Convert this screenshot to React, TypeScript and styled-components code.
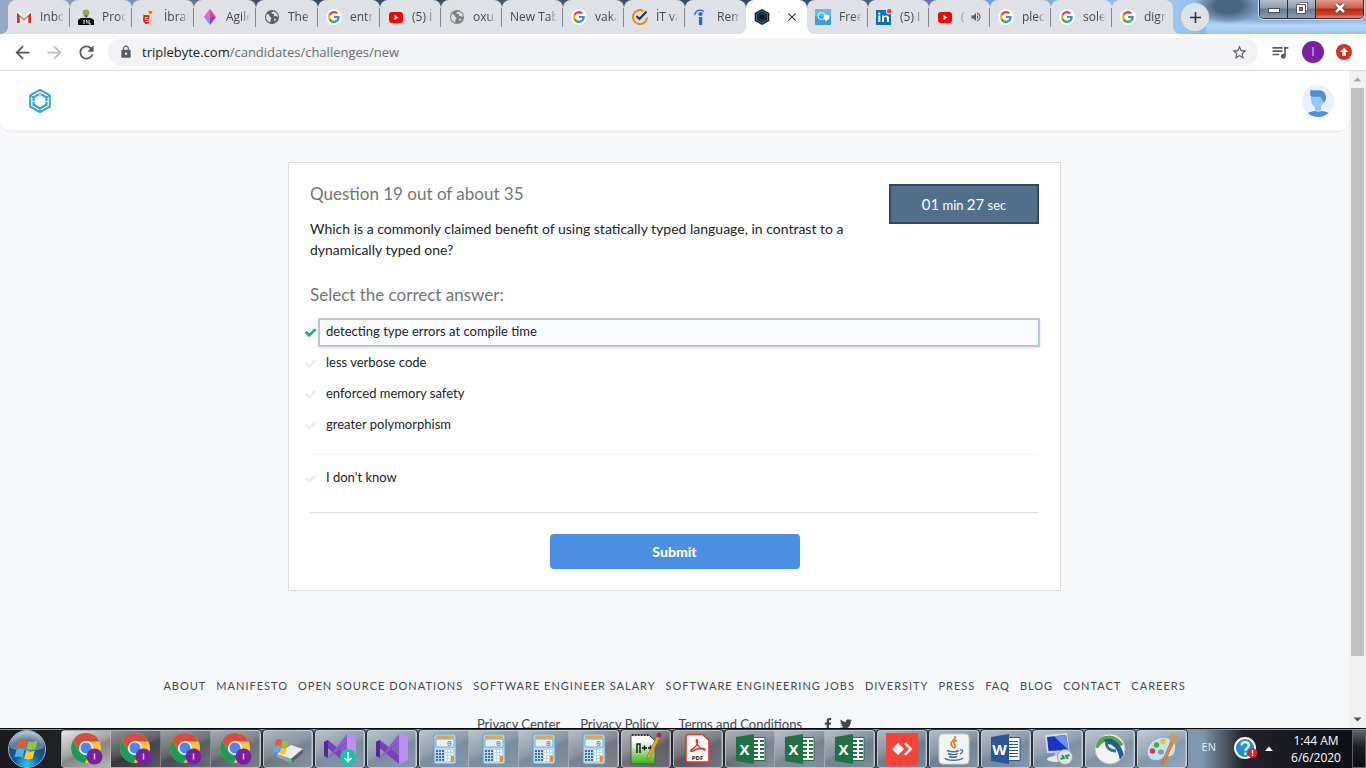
import React, { useState } from "react";
import styled, { createGlobalStyle, css } from "styled-components";
import {
  MdArrowBack, MdArrowForward, MdRefresh, MdLock, MdStarBorder, MdQueueMusic,
  MdVolumeUp, MdClose, MdAdd,
} from "react-icons/md";
import { FaTwitter, FaFacebookF } from "react-icons/fa";

const uiFont = `"Open Sans", "Noto Sans", sans-serif`;
const pageFont = `Lato, "Liberation Sans", sans-serif`;

const GlobalStyle = createGlobalStyle`
  * { box-sizing: border-box; }
  body { margin: 0; font-family: ${uiFont}; overflow: hidden; }
  button { font: inherit; border: 0; padding: 0; background: none; color: inherit; cursor: pointer; }
  svg { display: block; flex: none; }
`;

const Desktop = styled.div`
  display: flex;
  flex-direction: column;
  height: 100vh;
`;

/* ---------- tab strip ---------- */

const TitleBar = styled.header`
  display: flex;
  align-items: stretch;
  height: 34px;
  padding-left: 8px;
  background:
    radial-gradient(ellipse 34px 18px at calc(100% - 138px) 6px, #4d6480 0 40%, transparent),
    linear-gradient(to bottom, transparent 55%, #b4d6f8 75%, #9fc3e9) right / 160px 100% no-repeat,
    linear-gradient(to right, #93aac2 0, #7d93ad 10%, #33465c 20%, #46596f 40%, #2f4560 55%, #50688a 66%, #74a4d6 73%, #9cc6f0 86%, #7d9fc4 93%, #8fb0d4);
`;

const Tabs = styled.nav`
  display: grid;
  grid-template-columns: repeat(6, 62fr) repeat(13, 61fr);
  flex: 1;
  min-width: 0;
`;

const foot = css`
  content: "";
  position: absolute;
  bottom: 0;
  width: 8px;
  height: 8px;
`;

const Tab = styled.button<{ $active?: boolean; $first?: boolean; $last?: boolean }>`
  position: relative;
  display: flex;
  align-items: center;
  gap: 8px;
  min-width: 0;
  padding: 0 6px 0 8px;
  border-radius: 8px 8px 0 0;
  background: ${(p) => (p.$active ? "#fff" : "#dee1e6")};
  color: #45484d;
  font-size: 12px;
  line-height: 16px;
  text-align: left;
  z-index: ${(p) => (p.$active ? 1 : 0)};
  &::before {
    ${foot}
    left: -8px;
    display: ${(p) => (p.$active || p.$first ? "block" : "none")};
    background: radial-gradient(circle at 0 0, transparent 8px, ${(p) => (p.$active ? "#fff" : "#dee1e6")} 8px);
  }
  &::after {
    ${foot}
    right: -8px;
    display: ${(p) => (p.$active || p.$last ? "block" : "none")};
    background: radial-gradient(circle at 100% 0, transparent 8px, ${(p) => (p.$active ? "#fff" : "#dee1e6")} 8px);
  }
`;

const Separator = styled.i`
  position: absolute;
  right: 0;
  top: 8px;
  width: 1px;
  height: 19px;
  background: #85898f;
  z-index: 1;
`;

const TabTitle = styled.span`
  flex: 1;
  min-width: 0;
  overflow: hidden;
  white-space: nowrap;
  mask-image: linear-gradient(to left, transparent, #000 8px);
`;

const TabAction = styled.span`
  margin: 0 2px 0 -4px;
`;

const StripEnd = styled.div`
  display: flex;
  justify-content: space-between;
  width: 193px;
  padding: 0 2px 0 8px;
`;

const NewTab = styled.button`
  display: grid;
  place-items: center;
  width: 28px;
  height: 28px;
  margin-top: 3px;
  border-radius: 50%;
  background: #dee1e6;
  color: #303338;
`;

const WindowButtons = styled.div`
  display: flex;
  height: 19px;
  border: 1px solid #26303c;
  border-top: 0;
  border-radius: 0 0 5px 5px;
  overflow: hidden;
  box-shadow: 0 0 0 1px #cfdfee;
`;

const WindowButton = styled.button<{ $close?: boolean }>`
  display: grid;
  place-items: center;
  width: ${(p) => (p.$close ? 47 : 28)}px;
  padding-bottom: 2px;
  border-right: ${(p) => (p.$close ? 0 : 1)}px solid #26303c;
  background: ${(p) =>
    p.$close
      ? "linear-gradient(to bottom, #e09a8c, #cf5b45 45%, #b8260f 50%, #c9432c 80%, #e2917a)"
      : "linear-gradient(to bottom, #b4bfcd, #8d9bac 45%, #66788d 50%, #8a9db3)"};
`;

/* ---------- toolbar ---------- */

const Toolbar = styled.div`
  display: flex;
  align-items: center;
  height: 37px;
  padding: 0 14px 0 6px;
  background: #fff;
  border-bottom: 1px solid #d8d9dc;
  color: #5a5e63;
`;

const NavButton = styled.button<{ $off?: boolean }>`
  display: grid;
  place-items: center;
  width: 32px;
  height: 28px;
  color: ${(p) => (p.$off ? "#bcbec1" : "#55595e")};
`;

const AddressBar = styled.div`
  display: flex;
  align-items: center;
  flex: 1;
  gap: 9px;
  height: 28px;
  margin-left: 6px;
  padding: 0 10px 0 11px;
  border-radius: 14px;
  background: #f1f3f4;
`;

const Url = styled.span`
  flex: 1;
  font-size: 13px;
  line-height: 20px;
  color: #696c70;
  b { font-weight: 400; color: #202124; }
`;

const Extensions = styled.div`
  display: flex;
  align-items: center;
  gap: 12px;
  margin-left: 12px;
`;

const Profile = styled.button`
  width: 22px;
  height: 22px;
  border-radius: 50%;
  background: #7b1fa2;
  color: #e3cdee;
  font-size: 12px;
  line-height: 22px;
`;

/* ---------- page ---------- */

const Viewport = styled.div`
  display: flex;
  flex: 1;
  min-height: 0;
  overflow: hidden;
  background: #f7f8fa;
`;

const Page = styled.div`
  flex: 1;
  min-width: 0;
  overflow: hidden;
  font-family: ${pageFont};
`;

const SiteHeader = styled.div`
  display: flex;
  align-items: center;
  justify-content: space-between;
  height: 61px;
  padding: 0 15px 0 28px;
  background: #fff;
  border-bottom: 1px solid #e4e7ee;
  border-radius: 0 0 12px 12px;
`;

const Card = styled.form`
  max-width: 773px;
  margin: 30px auto 0;
  padding: 20px 21px 21px;
  background: #fff;
  border: 1px solid #dcdddf;
`;

const CardTop = styled.div`
  display: flex;
  justify-content: space-between;
  align-items: flex-start;
`;

const Heading = styled.h2`
  margin: 0;
  font-size: 17px;
  line-height: 22px;
  font-weight: 400;
  color: #757575;
`;

const AnswerHeading = styled(Heading)`
  margin-bottom: 12px;
`;

const Question = styled.p`
  max-width: 546px;
  margin: 13px 0 24px;
  font-size: 14px;
  line-height: 21px;
  color: #212529;
`;

const Timer = styled.div`
  flex: none;
  width: 150px;
  height: 40px;
  margin-top: 1px;
  border: 2px solid #34495e;
  background: #526f8b;
  color: #fff;
  font-size: 13px;
  line-height: 36px;
  text-align: center;
  big { font-size: 15px; }
`;

const Options = styled.div`
  margin: 0 -1px 0 -6px;
`;

const Option = styled.label<{ $on: boolean }>`
  display: flex;
  align-items: center;
  gap: 1px;
  height: 29px;
  margin-bottom: 2px;
  color: ${(p) => (p.$on ? "#15b374" : "#ececec")};
  input { position: absolute; opacity: 0; pointer-events: none; }
`;

const OptionText = styled.span<{ $on: boolean }>`
  flex: 1;
  height: 29px;
  padding: 0 7px;
  border: 1px solid ${(p) => (p.$on ? "#c6cace" : "transparent")};
  box-shadow: ${(p) => (p.$on ? "inset 0 0 0 1px #a3c4f1, 0 1px 3px #e6e6e6" : "none")};
  background: ${(p) => (p.$on ? "#fafcff" : "transparent")};
  font-size: 13px;
  line-height: 24px;
  color: #212529;
`;

const Divider = styled.hr<{ $strong?: boolean }>`
  margin: ${(p) => (p.$strong ? "19px 0 21px" : "14px 0 9px")};
  border: 0;
  border-top: 1px solid ${(p) => (p.$strong ? "#dadada" : "#f7f7f7")};
`;

const Submit = styled.button`
  display: block;
  width: 250px;
  height: 35px;
  margin: 0 auto;
  border-radius: 4px;
  background: #4990e2;
  color: #fff;
  font-family: ${pageFont};
  font-size: 14px;
  font-weight: 900;
`;

const Footer = styled.footer`
  margin-top: 86px;
  color: #45484e;
  a { color: inherit; text-decoration: none; }
`;

const FooterLinks = styled.nav`
  display: flex;
  justify-content: center;
  gap: 10px;
  font-size: 11px;
  line-height: 18px;
  letter-spacing: 1px;
  white-space: nowrap;
`;

const LegalLinks = styled.nav`
  display: flex;
  justify-content: center;
  align-items: center;
  gap: 20px;
  margin-top: 20px;
  padding-right: 20px;
  font-size: 13px;
  line-height: 18px;
`;

const Social = styled.span`
  display: flex;
  gap: 6px;
`;

const Scrollbar = styled.div`
  display: flex;
  flex-direction: column;
  align-items: center;
  width: 17px;
  background: #f1f1f1;
`;

const ScrollThumb = styled.div`
  flex: 1;
  width: 13px;
  margin-bottom: 55px;
  background: #c1c1c1;
`;

const Arrow = styled.svg.attrs({ width: 17, height: 17, viewBox: "0 0 17 17" })``;

/* ---------- taskbar ---------- */

const Taskbar = styled.footer`
  display: flex;
  height: 40px;
  border-top: 1px solid #05080c;
  box-shadow: inset 0 1px 0 #8396a5;
  background: linear-gradient(to right, #1b1c1f 0, #25272b 8%, #5d6670 18%, #73879a 24%, #6f8496 40%, #6b6c78 45%, #4f4a55 50%, #71808f 57%, #627284 66%, #75899d 78%, #8297ab 88%, #24222c 91%, #15161d 96%, #0c0d12);
`;

const StartButton = styled.button`
  display: grid;
  place-items: center;
  flex: none;
  width: 61px;
  padding-right: 7px;
`;

const TaskGroup = styled.div`
  display: flex;
  flex: none;
  margin: 1px 2px 0 0;
  border: 1px solid rgba(225, 232, 238, 0.7);
  border-radius: 3px;
  outline: 1px solid rgba(20, 25, 32, 0.75);
`;

const Task = styled.button<{ $edge: number; $active?: boolean }>`
  display: grid;
  place-items: center;
  width: ${(p) => 50 - p.$edge}px;
  background: ${(p) =>
    p.$active
      ? "linear-gradient(155deg, #e4e4e4, #a5a5a5 45%, #858585 55%, #b4b4b4)"
      : "linear-gradient(155deg, rgba(255,255,255,.5), rgba(255,255,255,.2) 45%, rgba(255,255,255,.06) 55%, rgba(255,255,255,.15))"};
  box-shadow: inset -1px 0 0 rgba(255, 255, 255, 0.25);
`;

const Tray = styled.div`
  display: flex;
  flex: 1;
  align-items: center;
  justify-content: flex-end;
  color: #fff;
  font-size: 12px;
`;

const Language = styled.span`
  margin-right: 18px;
  padding-bottom: 5px;
  font-size: 11px;
  color: #e8edf2;
`;

const Clock = styled.time`
  width: 72px;
  text-align: center;
  line-height: 17px;
  font-size: 12px;
`;

const ShowDesktop = styled.button`
  align-self: stretch;
  width: 14px;
  margin-top: 1px;
  border: 1px solid #5c6068;
  background: linear-gradient(to bottom, #5e6167, #1a1b20 45%, #0e0f13);
`;

/* ---------- drawings ---------- */

const GoogleIcon = () => (
  <svg width="16" height="16" viewBox="0 0 32 32">
    <circle cx="16" cy="16" r="16" fill="#fff" />
    <g transform="translate(4 4)">
      <path fill="#4285f4" d="M23.500 12.300c0-.9-.1-1.500-.2-2.200H12v4.100h6.600c-.1 1.100-.9 2.800-2.500 3.900l3.800 3C22.100 19 23.500 16 23.500 12.300z" />
      <path fill="#34a853" d="M12 24c3.200 0 5.900-1.100 7.900-2.900l-3.800-3c-1 .7-2.400 1.200-4.100 1.200-3.200 0-5.800-2.100-6.800-5l-3.900 3C3.300 21.300 7.300 24 12 24z" />
      <path fill="#fbbc05" d="M5.200 14.300c-.2-.7-.4-1.500-.4-2.300s.1-1.600.4-2.300l-4-3.100C.5 8.300 0 10.100 0 12s.5 3.700 1.300 5.400z" />
      <path fill="#ea4335" d="M12 4.700c2.200 0 3.700 1 4.600 1.800L20 3.200C17.900 1.200 15.200 0 12 0 7.300 0 3.300 2.700 1.300 6.600l3.900 3.100c1-3 3.600-5 6.800-5z" />
    </g>
  </svg>
);

const YoutubeIcon = () => (
  <svg width="16" height="16" viewBox="0 0 16 16">
    <rect x="1" y="3" width="14" height="11" rx="3" fill="#f00" />
    <path d="M6.500 6v5l4-2.500z" fill="#fff" />
  </svg>
);

const GlobeIcon = ({ color }: { color: string }) => (
  <svg width="16" height="16" viewBox="0 0 16 16">
    <circle cx="8" cy="8" r="7" fill={color} />
    <path d="M3 5c2 .3 2.500 1 2.500 2s1.800 1 2 2-1 1-1 2.200 0 1.300-.5 2.300C3.500 12.500 2 10.500 2 8c0-1 .4-2.200 1-3zM9 2.500c-1 1-2 1-1.500 2s2-.3 2.500.7-.8 1.300.2 1.800 2.800 0 3.800 1C14 5 12 2.700 9 2.500zM10 9.500l2.500.5-2 2.500z" fill="#dee1e6" />
  </svg>
);

const GmailIcon = () => (
  <svg width="16" height="16" viewBox="0 0 16 16">
    <rect x="1" y="3" width="14" height="11" rx="1" fill="#f4f4f4" />
    <path d="M1 14V4l7 6 7-6v10h-2.500V7.500L8 11.500 3.500 7.500V14z" fill="#d54b3d" />
    <path d="M3 3h10L8 7.500z" fill="#e6e0dd" />
    <path d="M1 14V4l2.500 2V14zM15 14V4l-2.500 2v8z" fill="#c5372c" />
  </svg>
);

const PersonIcon = () => (
  <svg width="16" height="16" viewBox="0 0 16 16">
    <path d="M0 16V11l3-2h10l3 2v5z" fill="#050505" />
    <circle cx="8" cy="3.800" r="3.300" fill="#95a55a" />
    <path d="M6.500 6h3v2.500h-3z" fill="#5f6f35" />
    <path d="M6 11v4M8 11.500h1v3M11 11v4h2" stroke="#fff" fill="none" />
  </svg>
);

const PopcornIcon = () => (
  <svg width="16" height="16" viewBox="0 0 16 16">
    <path d="M3.500 5h8.500l-2 9.500-4.500.5L3 12z" fill="#d8262b" />
    <path d="M9.500 7l2.500-1-1.500 8-1.500.5z" fill="#f6e6da" />
    <path d="M3.500 6L3 3.500 5 2l1-1.500L8.500 1l2-.5L12 2l1.500 1-.5 2.500-2 1.500-3-1z" fill="#efe0bb" />
    <path d="M8.500 1.500l2 1 2-.5-1 2.500-2 .5z" fill="#c7523b" />
    <path d="M8 8.500H5.500v2H8v2H5.500" stroke="#ffc934" strokeWidth="1.200" fill="none" />
    <path d="M11 13l2.500 1-1 2H9z" fill="#e3cfa8" />
  </svg>
);

const GemIcon = () => (
  <svg width="16" height="16" viewBox="0 0 16 16">
    <path d="M8 0l6 8H2z" fill="#f0379b" />
    <path d="M8 0v8H2z" fill="#ff5eb0" />
    <path d="M2 8h6v8z" fill="#55a8f3" />
    <path d="M8 8h6l-6 8z" fill="#7b42e8" />
  </svg>
);

const CheckRingIcon = () => (
  <svg width="16" height="16" viewBox="0 0 16 16" fill="none">
    <path d="M11.500 2A7 7 0 1 0 15 8.500" stroke="#f5831f" strokeWidth="2" />
    <path d="M4.500 7l3 3 7-7.500" stroke="#2b2f36" strokeWidth="2" />
  </svg>
);

const IndeedIcon = () => (
  <svg width="16" height="16" viewBox="0 0 16 16">
    <path d="M1.500 6C3 1 7 0 11 2.500" stroke="#2566eb" strokeWidth="1.300" fill="none" />
    <circle cx="7.500" cy="5" r="2.100" fill="#2566eb" />
    <path d="M6 8h3.200v8H6z" fill="#2566eb" />
  </svg>
);

const HexIcon = () => (
  <svg width="16" height="16" viewBox="0 0 16 16">
    <path d="M8 0l7.300 4v8L8 16 .7 12V4z" fill="#14222d" />
    <path d="M8 2l5.500 3v6L8 14l-5.500-3V5z" fill="none" stroke="#2f7fa3" />
    <path d="M8 4.500L11 6.200v3.600L8 11.500 5 9.800V6.200z" fill="#05090c" stroke="#2f7fa3" strokeWidth=".6" />
  </svg>
);

const ChatIcon = () => (
  <svg width="16" height="16" viewBox="0 0 16 16">
    <rect width="16" height="16" rx="1" fill="#3a9fdb" />
    <path d="M0 0h16v7H0z" fill="#62bbe8" />
    <circle cx="6.500" cy="7" r="3.500" fill="none" stroke="#e8f6fd" />
    <path d="M10.500 5.500c2.500 0 4 1 4 2.700s-1.300 2.500-2.500 3l-1.500 1.500v-1.500C8 10.500 8 6 10.500 5.500z" fill="#f2fbff" />
  </svg>
);

const LinkedinIcon = () => (
  <svg width="16" height="16" viewBox="0 0 16 16">
    <path d="M0 1h15v15H0z" fill="#0a72b1" />
    <path d="M2.300 6.500h2V13h-2zM2.300 3.500h2v2h-2zM6 6.500h2v1c1-1.600 5-1.600 5 1.500v4h-2V9.500c0-2-3-2-3 0V13H6z" fill="#fff" />
    <circle cx="13" cy="2.500" r="3" fill="#dee1e6" />
    <circle cx="13.200" cy="2.300" r="2.200" fill="#ea4335" />
  </svg>
);

const Check = () => (
  <svg width="13" height="13" viewBox="0 0 1792 1792" fill="currentColor">
    <path d="M1671 566q0 40-28 68l-724 724-136 136q-28 28-68 28t-68-28l-136-136-362-362q-28-28-28-68t28-68l136-136q28-28 68-28t68 28l294 295 656-657q28-28 68-28t68 28l136 136q28 28 28 68z" />
  </svg>
);

const SiteLogo = () => (
  <svg width="24" height="26" viewBox="0 0 24 26" fill="none" stroke="#35a0cf">
    <path d="M12 1.800l9.800 5.600v11.200L12 24.200l-9.800-5.600V7.400z" strokeWidth="2" />
    <path d="M12 5.800l6.500 3.600v7.400L12 20.500l-6.500-3.700V9.400z" strokeWidth="2.200" />
    <path d="M2.500 7.500l3.500 2M21.500 7.500l-3.500 2M12 20v4" strokeWidth="1.400" />
    <path d="M3.500 13.500h3M20.500 13.500h-3M9.500 5l2.500 2 2.500-2" stroke="#fff" strokeWidth=".8" />
  </svg>
);

const Avatar = () => (
  <svg width="32" height="32" viewBox="0 0 32 32">
    <defs><clipPath id="face"><circle cx="16" cy="16" r="16" /></clipPath></defs>
    <circle cx="16" cy="16" r="16" fill="#e9f1fc" />
    <g clipPath="url(#face)">
      <path d="M9 10h13c0 5-.5 9-3 11v6h-6v-5c-3-1-4.500-6-4-12z" fill="#98c5fb" />
      <path d="M6 28c3-1.500 6-2 7-2 1.500 1.500 5 1.500 6.500 0 2 0 5 .8 7.500 2v5H6z" fill="#4990e2" />
      <path d="M8.500 11C8 8 8 6 9 4.500 10 6 15 5 19 5.500c4 1 5.500 5 5 8.500-.4 2-1.500 3-3 3.500 0-2-.5-3-1.500-4-.5-1-1-1.500-1.500-2-3 .5-6 .5-9.500-.5z" fill="#4990e2" />
    </g>
  </svg>
);

const UpdateIcon = () => (
  <svg width="16" height="16" viewBox="0 0 16 16">
    <circle cx="8" cy="8" r="8" fill="#d93025" />
    <path d="M8 3.500L12.200 8H9.800v3.800H6.200V8H3.800z" fill="#fff" />
  </svg>
);

const StartOrb = () => (
  <svg width="38" height="38" viewBox="0 0 38 38">
    <defs>
      <radialGradient id="orb" cx=".5" cy=".9" r=".85">
        <stop offset="0" stopColor="#2fc4f5" /><stop offset=".4" stopColor="#0e5f9b" />
        <stop offset=".75" stopColor="#26486a" /><stop offset="1" stopColor="#9fb9cc" />
      </radialGradient>
    </defs>
    <circle cx="19" cy="19" r="18.500" fill="url(#orb)" stroke="#9ab6c8" />
    <path d="M2 18C2 8 9 2 19 2s17 6 17 16c-8 4-24 4-34 0z" fill="#cfe0ec" opacity=".35" />
    <path d="M11 10c3-1.600 5-1.200 8 .2l-2 8c-3-1.300-5-1.500-8-.2z" fill="#ee5a24" />
    <path d="M20.500 11c3 1.300 6 1.300 9-.2l-2.200 8c-3 1.400-5.500 1.300-8.500.1z" fill="#8fc640" />
    <path d="M8.600 19.500c3-1.400 5-1 8 .1l-2 8c-3-1.200-5-1.500-8.200-.1z" fill="#4fb2ec" />
    <path d="M18.200 20.500c3 1.200 5.500 1.300 8.600-.1l-2.200 8c-3 1.400-5.500 1.200-8.400.1z" fill="#fdc82d" />
  </svg>
);

const ChromeIcon = () => (
  <svg width="34" height="34" viewBox="0 0 34 34">
    <circle cx="16" cy="16" r="15" fill="#fdc73a" />
    <path d="M3 8.500A15 15 0 0 1 29.500 9.500H16a7 7 0 0 0-6.200 9.500z" fill="#dd4b3e" />
    <path d="M3 8.500A15 15 0 0 0 14.500 31l6.500-10.500a7 7 0 0 1-11.200-1z" fill="#199d5a" />
    <circle cx="16" cy="16" r="7" fill="#f4f4f4" />
    <circle cx="16" cy="16" r="5.500" fill="#4a87ee" />
    <circle cx="24.500" cy="24.500" r="8" fill="#7b1fa2" />
    <path d="M24.500 21.500v6" stroke="#d9bfe6" strokeWidth="1.500" />
  </svg>
);

const DriveIcon = () => (
  <svg width="34" height="32" viewBox="0 0 34 32">
    <path d="M6 21l14-9 12 4-12 10z" fill="#e9edf0" />
    <path d="M6 21l14 5v4L6 24z" fill="#9aa3a9" />
    <path d="M20 26l12-10v4l-12 10z" fill="#555e66" />
    <path d="M17 25.500l4 1.500v2.500l-4-1.500z" fill="#3ed83c" />
    <path d="M5 7q3-2 6 0l-1.500 6q-3-2-6 0z" fill="#ee5a24" />
    <path d="M12 7.500q3 1.500 6 0l-1.500 6q-3 2-6 0z" fill="#8fc640" />
    <path d="M3 14q3-2 6 0l-1.500 6q-3-2-6 0z" fill="#4fb2ec" />
    <path d="M10 14.500q3 1.500 6 0l-1.500 6q-3 2-6 0z" fill="#fdc82d" />
  </svg>
);

const VisualStudioIcon = ({ badge }: { badge?: boolean }) => (
  <svg width="34" height="34" viewBox="0 0 34 34">
    <path d="M1 10l4-2 19 16v8L1 13z" fill="#7d3dc0" />
    <path d="M1 10l4-2v18l-4-2z" fill="#532a95" />
    <path d="M5 26L24 2v9L8 24z" fill="#9556d8" />
    <path d="M24 1l9 4v23l-9 5z" fill="#bd8ef2" />
    <path d="M24 10L14 17l10 8z" fill="#7840b8" opacity=".5" />
    {badge && (
      <g>
        <circle cx="25" cy="25" r="8" fill="#12c5a8" />
        <path d="M25 20v9M21.500 26l3.500 3.500 3.500-3.500" stroke="#fff" strokeWidth="1.700" fill="none" />
      </g>
    )}
  </svg>
);

const CalculatorIcon = () => (
  <svg width="24" height="32" viewBox="0 0 24 32">
    <rect x="1" y="1" width="22" height="30" rx="2" fill="#b9d9f0" stroke="#5e9cc6" />
    <path d="M3 2.500h18v3H3z" fill="#f3a42e" />
    <path d="M3 6h18v8H3z" fill="#e3f1fb" stroke="#79a9cd" />
    <text x="14" y="13" fontFamily="Liberation Mono" fontSize="8" fill="#33618d">0</text>
    {[17, 20, 23, 26].map((y) =>
      [3, 6, 9, 12, 15, 18].map((x) => (
        <rect key={`${x}-${y}`} x={x} y={y} width="2" height="2" fill={x < 11 ? "#3d6f9f" : "#fff"} />
      )),
    )}
    <path d="M18 23h3v6h-3z" fill="#f28b1d" />
  </svg>
);

const NotepadIcon = () => (
  <svg width="32" height="34" viewBox="0 0 32 34">
    <defs>
      <linearGradient id="pad" x2="0" y2="1"><stop offset=".2" stopColor="#fff" /><stop offset="1" stopColor="#2fb70c" /></linearGradient>
    </defs>
    <path d="M1 3h18l6 6v23H1z" fill="url(#pad)" stroke="#4f594c" />
    <path d="M2 3h17" stroke="#333" strokeDasharray="1.500 1.500" strokeWidth="2" />
    <path d="M7 21v-9h3v9M12 16h5M14.500 13.500v5M18 16h5M20.500 13.500v5" stroke="#111" strokeWidth="1.400" fill="none" />
    <path d="M27 4l3 1.500L20 26l-3 1 .5-3.500z" fill="#e8a526" stroke="#8a5a12" strokeWidth=".6" />
    <circle cx="29" cy="3" r="2.500" fill="#9c3340" />
  </svg>
);

const PdfIcon = () => (
  <svg width="26" height="32" viewBox="0 0 26 32">
    <path d="M3 1.500h15l6 6V29H3a2 2 0 0 1-2-2V3.500a2 2 0 0 1 2-2z" fill="#fff" stroke="#e5322d" strokeWidth="1.600" />
    <path d="M6 17c4-2 7-6 6.500-10-1.500-1.500-2 1 0 4.500s5 5 7.500 5.500c1-2-5-2-9-.5-3 1.500-6 3-5 .5z" fill="none" stroke="#e5322d" strokeWidth="1.400" />
    <text x="12.500" y="27" textAnchor="middle" fontFamily="Open Sans" fontWeight="700" fontSize="6" fill="#111">PDF</text>
  </svg>
);

const OfficeIcon = ({ letter, color }: { letter: string; color: string }) => (
  <svg width="32" height="32" viewBox="0 0 32 32">
    <path d="M16 4.500h14v23H16z" fill="#fff" stroke={color} />
    {letter === "X" ? (
      <path d="M19 8h4M25 8h4M19 12h4M25 12h4M19 16h4M25 16h4M19 20h4M25 20h4M19 24h4M25 24h4" stroke={color} strokeWidth="2" />
    ) : (
      <path d="M18 8.500h10M18 11.500h10M18 14.500h10M18 17.500h10M18 20.500h10M18 23.500h10" stroke={color} />
    )}
    <path d="M1 4l18-3v30L1 28z" fill={color} />
    <text x="9.500" y="21.500" textAnchor="middle" fontFamily="Open Sans" fontWeight="700" fontSize="15" fill="#fff">{letter}</text>
  </svg>
);

const AnydeskIcon = () => (
  <svg width="32" height="32" viewBox="0 0 32 32">
    <path d="M0 0h32v32H0z" fill="#fb4236" />
    <path d="M12 10l6 6-6 6-6-6z" fill="#fff" />
    <path d="M17.500 10.500L20 9.500l6.500 6.500-6.500 6.500-2.500-1 5.500-5.500z" fill="#fff" />
  </svg>
);

const JavaIcon = () => (
  <svg width="32" height="32" viewBox="0 0 32 32" fill="none">
    <rect x="1" y="1" width="30" height="30" rx="4" fill="#f1f4f6" stroke="#c5cdd4" />
    <path d="M17 3c2 4-5 5-4 8 .5 2 2 2.500 2 4M19 7c-4 2-4 3-2 5 1 1.500 0 2.500-1 3.500" stroke="#e8791d" strokeWidth="1.600" />
    <path d="M9 17.500c4 1.500 9 1.500 12 0M10 20.500c3 1.500 8 1.500 10 0M11 23.500c3 1 6 1 8 0M7 25c1 3 15 3 18 0M22 17c4-1 3 3 0 4" stroke="#3f6f96" strokeWidth="1.400" />
  </svg>
);

const RemoteIcon = () => (
  <svg width="34" height="34" viewBox="0 0 34 34">
    <path d="M4 3l22-2 3 19L6 21z" fill="#d7dde2" />
    <path d="M6 5l19-2 2.500 15L7.500 19z" fill="#1b32c8" />
    <path d="M13 4.300L25 3l2.500 15z" fill="#6f93f2" />
    <path d="M14 21h8l1 5H12z" fill="#c5ccd2" />
    <ellipse cx="15" cy="27" rx="9" ry="3" fill="#e5e9ec" />
    <circle cx="24" cy="25" r="7.500" fill="#dfe4e3" stroke="#9aa2a5" />
    <path d="M19.500 27l3.500-1-2-3M28.500 23l-3.500 1 2 3" stroke="#229a3a" strokeWidth="2" fill="none" />
  </svg>
);

const SphereIcon = () => (
  <svg width="32" height="32" viewBox="0 0 32 32">
    <defs><clipPath id="ball"><circle cx="16" cy="16" r="15" /></clipPath></defs>
    <circle cx="16" cy="16" r="15" fill="#f1f4f3" />
    <g clipPath="url(#ball)" fill="none">
      <path d="M1 14C8 3 20 3 27 13" stroke="#55a842" strokeWidth="6" />
      <path d="M11 9c8-3 16 6 17 17" stroke="#1d5c9c" strokeWidth="5" />
      <path d="M13 8c-2 6 3 10 9 10" stroke="#32798f" strokeWidth="3" />
    </g>
    <circle cx="16" cy="16" r="15" fill="none" stroke="#b8c2c5" />
  </svg>
);

const PaintIcon = () => (
  <svg width="34" height="34" viewBox="0 0 34 34">
    <path d="M3 24C-1 16 8 5 18 5s15 7 12 15-9 3-12 6-11 5-15-2z" fill="#c4e1f2" stroke="#6ea6ca" />
    <ellipse cx="16" cy="20" rx="3" ry="2.500" fill="#7799b3" />
    <circle cx="7.500" cy="19" r="2.700" fill="#d93a34" />
    <circle cx="11.500" cy="13" r="2.700" fill="#41a844" />
    <circle cx="18" cy="9.500" r="2.700" fill="#f2c31d" />
    <path d="M26 9l3 1-11 23-2-1z" fill="#e98a24" stroke="#b15d10" strokeWidth=".6" />
    <path d="M25 10l-1-6 4-3 5 3-3 7z" fill="#c79b63" />
  </svg>
);

const HelpIcon = () => (
  <svg width="24" height="24" viewBox="0 0 24 24">
    <circle cx="11" cy="11" r="10" fill="#1795d8" stroke="#fff" strokeWidth="2" />
    <path d="M7.500 8.500c0-4.500 7.300-4.300 7.300 0 0 2.700-3.500 2.600-3.500 5.500M11.300 15.500v2.500" stroke="#fff" strokeWidth="2.300" fill="none" />
    <circle cx="18.500" cy="16" r="4.800" fill="#ef1c24" />
    <path d="M18.500 13v3.500M18.500 17.500v1.500" stroke="#fff" strokeWidth="1.400" />
  </svg>
);

/* ---------- data ---------- */

const google = <GoogleIcon />;
const tabs: { icon?: React.ReactNode; title: string; active?: boolean; audio?: boolean }[] = [
  { icon: <GmailIcon />, title: "Inbo" },
  { icon: <PersonIcon />, title: "Proc" },
  { icon: <PopcornIcon />, title: "İbral" },
  { icon: <GemIcon />, title: "Agile" },
  { icon: <GlobeIcon color="#5a5d61" />, title: "The" },
  { icon: google, title: "entr" },
  { icon: <YoutubeIcon />, title: "(5) İ" },
  { icon: <GlobeIcon color="#808080" />, title: "oxu." },
  { title: "New Tab" },
  { icon: google, title: "vaka" },
  { icon: <CheckRingIcon />, title: "İT va" },
  { icon: <IndeedIcon />, title: "Rem" },
  { icon: <HexIcon />, title: "T", active: true },
  { icon: <ChatIcon />, title: "Free" },
  { icon: <LinkedinIcon />, title: "(5) I" },
  { icon: <YoutubeIcon />, title: "(", audio: true },
  { icon: google, title: "plec" },
  { icon: google, title: "sole" },
  { icon: google, title: "digr" },
];

const answers = [
  "detecting type errors at compile time",
  "less verbose code",
  "enforced memory safety",
  "greater polymorphism",
];

const footerLinks = [
  "ABOUT", "MANIFESTO", "OPEN SOURCE DONATIONS", "SOFTWARE ENGINEER SALARY",
  "SOFTWARE ENGINEERING JOBS", "DIVERSITY", "PRESS", "FAQ", "BLOG", "CONTACT", "CAREERS",
];

const excel = <OfficeIcon letter="X" color="#1f7244" />;
const taskGroups: { name: string; icons: React.ReactNode[]; active?: boolean }[] = [
  { name: "Chrome", icons: [<ChromeIcon />, <ChromeIcon />, <ChromeIcon />, <ChromeIcon />], active: true },
  { name: "Drive", icons: [<DriveIcon />] },
  { name: "Installer", icons: [<VisualStudioIcon badge />] },
  { name: "Visual Studio", icons: [<VisualStudioIcon />] },
  { name: "Calculator", icons: [<CalculatorIcon />, <CalculatorIcon />, <CalculatorIcon />, <CalculatorIcon />] },
  { name: "Notepad++", icons: [<NotepadIcon />] },
  { name: "PDF", icons: [<PdfIcon />] },
  { name: "Excel", icons: [excel, excel, excel] },
  { name: "AnyDesk", icons: [<AnydeskIcon />] },
  { name: "Java", icons: [<JavaIcon />] },
  { name: "Word", icons: [<OfficeIcon letter="W" color="#2a579a" />] },
  { name: "Remote Desktop", icons: [<RemoteIcon />] },
  { name: "AnyConnect", icons: [<SphereIcon />] },
  { name: "Paint", icons: [<PaintIcon />] },
];

export default function App() {
  const [choice, setChoice] = useState(answers[0]);

  const option = (text: string) => (
    <Option key={text} $on={choice === text}>
      <input type="radio" name="answer" checked={choice === text} onChange={() => setChoice(text)} />
      <Check />
      <OptionText $on={choice === text}>{text}</OptionText>
    </Option>
  );

  return (
    <Desktop>
      <GlobalStyle />
      <TitleBar>
        <Tabs>
          {tabs.map((tab, i) => (
            <Tab key={i} $active={tab.active} $first={i === 0} $last={i === tabs.length - 1}>
              {tab.icon}
              <TabTitle>{tab.title}</TabTitle>
              {tab.audio && <TabAction><MdVolumeUp size={12} color="#5a5d61" /></TabAction>}
              {tab.active && <TabAction><MdClose size={14} color="#3c4043" /></TabAction>}
              {!tab.active && !tabs[i + 1]?.active && i < tabs.length - 1 && <Separator />}
            </Tab>
          ))}
        </Tabs>
        <StripEnd>
          <NewTab aria-label="New tab"><MdAdd size={19} /></NewTab>
          <WindowButtons>
            <WindowButton aria-label="Minimize">
              <svg width="12" height="12" viewBox="0 0 12 12"><rect x=".5" y="6.500" width="11" height="4" fill="#fff" stroke="#444c58" /></svg>
            </WindowButton>
            <WindowButton aria-label="Restore">
              <svg width="12" height="12" viewBox="0 0 12 12" fill="none">
                <path d="M4 1.500h6.500V8" stroke="#444c58" strokeWidth="3" /><path d="M4 1.500h6.500V8" stroke="#fff" strokeWidth="1.500" />
                <rect x="2" y="4" width="6" height="6" stroke="#444c58" strokeWidth="3.500" /><rect x="2" y="4" width="6" height="6" stroke="#fff" strokeWidth="2" />
              </svg>
            </WindowButton>
            <WindowButton $close aria-label="Close">
              <svg width="14" height="12" viewBox="0 0 14 12" fill="none">
                <path d="M3 2l8 8M11 2l-8 8" stroke="#4a3a3d" strokeWidth="4.500" /><path d="M3 2l8 8M11 2l-8 8" stroke="#fff" strokeWidth="2.600" />
              </svg>
            </WindowButton>
          </WindowButtons>
        </StripEnd>
      </TitleBar>

      <Toolbar>
        <NavButton aria-label="Back"><MdArrowBack size={21} /></NavButton>
        <NavButton $off aria-label="Forward"><MdArrowForward size={21} /></NavButton>
        <NavButton aria-label="Reload"><MdRefresh size={21} /></NavButton>
        <AddressBar>
          <MdLock size={14} />
          <Url><b>triplebyte.com</b>/candidates/challenges/new</Url>
          <MdStarBorder size={17} />
        </AddressBar>
        <Extensions>
          <MdQueueMusic size={20} />
          <Profile>I</Profile>
          <UpdateIcon />
        </Extensions>
      </Toolbar>

      <Viewport>
        <Page>
          <SiteHeader>
            <SiteLogo />
            <Avatar />
          </SiteHeader>
          <Card onSubmit={(e) => e.preventDefault()}>
            <CardTop>
              <div>
                <Heading>Question 19 out of about 35</Heading>
                <Question>
                  Which is a commonly claimed benefit of using statically typed language, in contrast to a
                  dynamically typed one?
                </Question>
              </div>
              <Timer><big>01</big> min <big>27</big> sec</Timer>
            </CardTop>
            <AnswerHeading>Select the correct answer:</AnswerHeading>
            <Options>{answers.map(option)}</Options>
            <Divider />
            <Options>{option("I don't know")}</Options>
            <Divider $strong />
            <Submit type="submit">Submit</Submit>
          </Card>
          <Footer>
            <FooterLinks>
              {footerLinks.map((l) => <a href="#" key={l}>{l}</a>)}
            </FooterLinks>
            <LegalLinks>
              <a href="#">Privacy Center</a>
              <a href="#">Privacy Policy</a>
              <a href="#">Terms and Conditions</a>
              <Social>
                <a href="#" aria-label="Facebook"><FaFacebookF size={12} /></a>
                <a href="#" aria-label="Twitter"><FaTwitter size={12} /></a>
              </Social>
            </LegalLinks>
          </Footer>
        </Page>
        <Scrollbar>
          <Arrow><path d="M8.500 6.500l4 4h-8z" fill="#a3a3a3" /></Arrow>
          <ScrollThumb />
          <Arrow><path d="M4.500 6.500h8l-4 4z" fill="#505050" /></Arrow>
        </Scrollbar>
      </Viewport>

      <Taskbar>
        <StartButton aria-label="Start"><StartOrb /></StartButton>
        {taskGroups.map((g) => (
          <TaskGroup key={g.name}>
            {g.icons.map((icon, i) => (
              <Task
                key={i}
                aria-label={g.name}
                $active={g.active && i === 0}
                $edge={(i === 0 ? 1 : 0) + (i === g.icons.length - 1 ? 1 : 0)}
              >
                {icon}
              </Task>
            ))}
          </TaskGroup>
        ))}
        <Tray>
          <Language>EN</Language>
          <HelpIcon />
          <svg width="22" height="8" viewBox="0 0 22 8"><path d="M11 1.500l4 4.500H7z" fill="#fff" /></svg>
          <Clock>1:44 AM<br />6/6/2020</Clock>
          <ShowDesktop aria-label="Show desktop" />
        </Tray>
      </Taskbar>
    </Desktop>
  );
}
